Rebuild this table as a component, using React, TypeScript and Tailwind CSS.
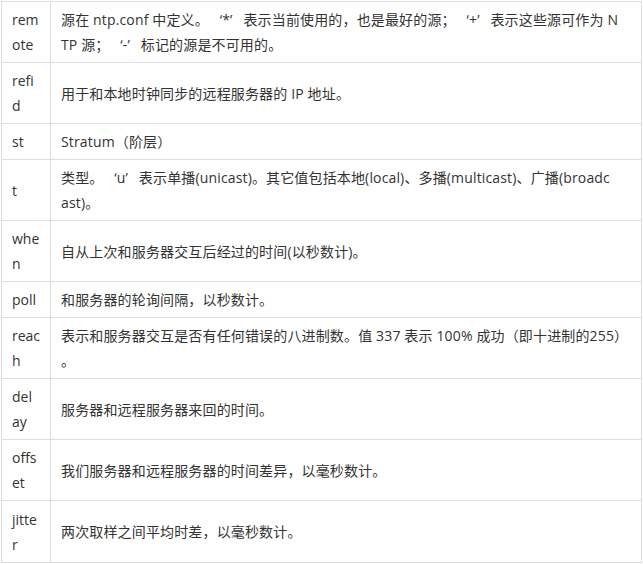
import React from "react";

const rows: { name: string[]; desc: string[] }[] = [
  {
    name: ["rem", "ote"],
    desc: [
      "源在 ntp.conf 中定义。 ‘*’ 表示当前使用的，也是最好的源； ‘+’ 表示这些源可作为 N",
      "TP 源； ‘-’ 标记的源是不可用的。",
    ],
  },
  { name: ["refi", "d"], desc: ["用于和本地时钟同步的远程服务器的 IP 地址。"] },
  { name: ["st"], desc: ["Stratum（阶层）"] },
  {
    name: ["t"],
    desc: [
      "类型。 ‘u’ 表示单播(unicast)。其它值包括本地(local)、多播(multicast)、广播(broadc",
      "ast)。",
    ],
  },
  { name: ["whe", "n"], desc: ["自从上次和服务器交互后经过的时间(以秒数计)。"] },
  { name: ["poll"], desc: ["和服务器的轮询间隔，以秒数计。"] },
  {
    name: ["reac", "h"],
    desc: [
      "表示和服务器交互是否有任何错误的八进制数。值 337 表示 100% 成功（即十进制的255）",
      "。",
    ],
  },
  { name: ["del", "ay"], desc: ["服务器和远程服务器来回的时间。"] },
  { name: ["offs", "et"], desc: ["我们服务器和远程服务器的时间差异，以毫秒数计。"] },
  { name: ["jitte", "r"], desc: ["两次取样之间平均时差，以毫秒数计。"] },
];

// the original sets curly quotes with extra room on the outer side
function Line({ text }: { text: string }) {
  const parts = text.split(/([‘’])/);
  return (
    <div className="whitespace-nowrap">
      {parts.map((p, i) =>
        p === "‘" ? (
          <span key={i} className="ml-[7px]">{p}</span>
        ) : p === "’" ? (
          <span key={i} className="mr-[7px]">{p}</span>
        ) : (
          <React.Fragment key={i}>{p}</React.Fragment>
        )
      )}
    </div>
  );
}

export default function App() {
  return (
    <div className="w-[643px] h-[564px] bg-white pt-[1px] pl-[1px] font-['Open_Sans','Noto_Sans_CJK_SC',sans-serif] text-[14px] leading-[25px] text-[#333]">
      <div className="w-[641px] border border-[#ddd]">
        {rows.map((row, i) => {
          const tall = row.name.length > 1 || row.desc.length > 1;
          return (
            <div
              key={row.name.join("")}
              className={
                "flex " +
                (tall ? "h-[61px]" : "h-[36px]") +
                (i < rows.length - 1 ? " border-b border-[#ddd]" : "")
              }
            >
              <div className="w-[49px] shrink-0 border-r border-[#ddd] px-[10px] flex flex-col justify-center">
                {row.name.map((n) => (
                  <div key={n} className="whitespace-nowrap">
                    {n}
                  </div>
                ))}
              </div>
              <div className="flex-1 px-[10px] flex flex-col justify-center tracking-[0.15px]">
                {row.desc.map((d) => (
                  <Line key={d} text={d} />
                ))}
              </div>
            </div>
          );
        })}
      </div>
    </div>
  );
}
